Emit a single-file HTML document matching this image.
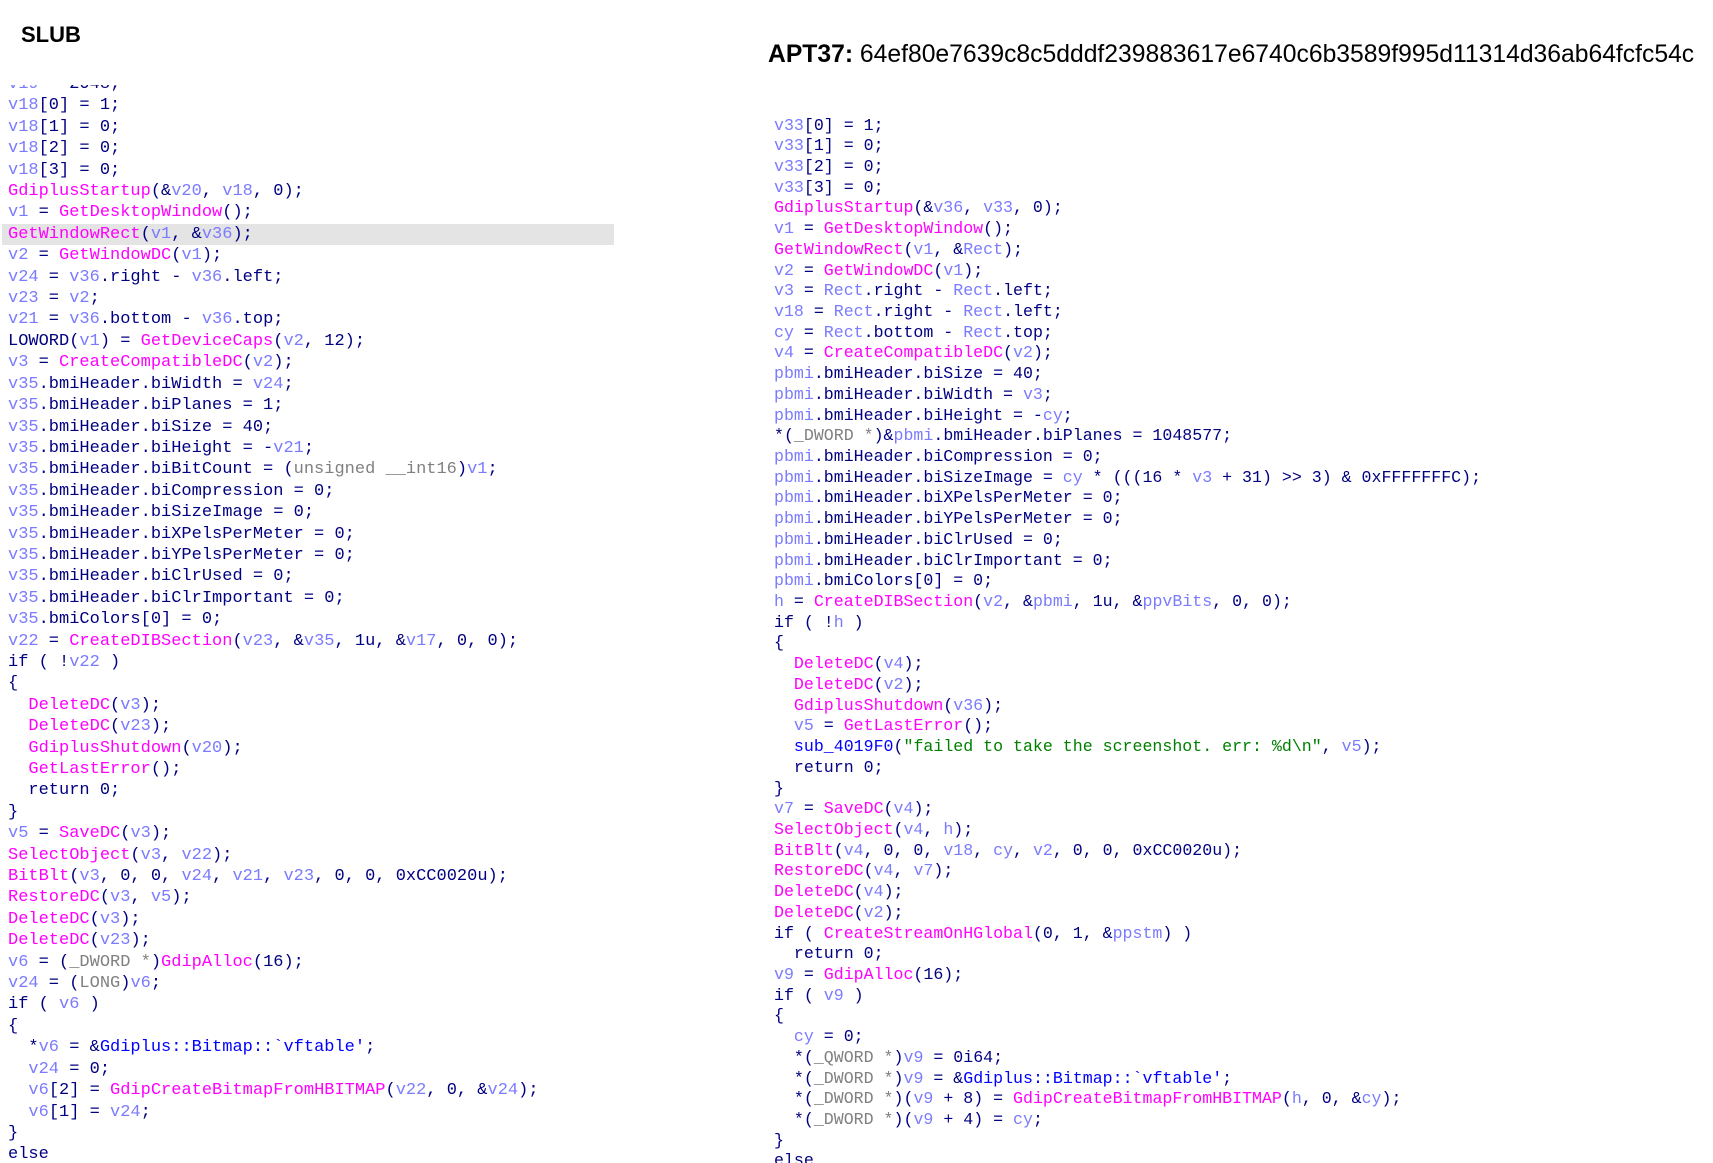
<!DOCTYPE html>
<html><head><meta charset="utf-8"><style>
html,body{margin:0;padding:0;background:#fff;width:1713px;height:1163px;overflow:hidden;position:relative}
.h{position:absolute;font-family:"Liberation Sans",sans-serif;color:#000;white-space:nowrap}
pre{margin:0;font-family:"Liberation Mono",monospace;color:#000080;position:absolute}
.v{color:#7b7bff}.f{color:#ff00ff}.g{color:#808080}.s{color:#008000}.b{color:#0000ff}
.clip{position:absolute;left:0;top:85px;width:700px;height:1078px;overflow:hidden}
#L{left:8px;top:-11px;font-size:17px;line-height:21.4px}
#R{left:774px;top:115.5px;font-size:16.6px;line-height:20.72px}
.hl{position:absolute;left:2px;width:612px;height:21.4px;background:#e4e4e4}
</style></head><body>
<div class="h" style="left:21px;top:22px;font-size:22px;font-weight:bold">SLUB</div>
<div class="h" style="left:768px;top:41px;font-size:24.7px"><b>APT37:</b> 64ef80e7639c8c5dddf239883617e6740c6b3589f995d11314d36ab64fcfc54c</div>
<div class="clip">
<div class="hl" style="top:138.8px"></div>
<pre id="L"><span class="v">v19</span> = 2048;
<span class="v">v18</span>[0] = 1;
<span class="v">v18</span>[1] = 0;
<span class="v">v18</span>[2] = 0;
<span class="v">v18</span>[3] = 0;
<span class="f">GdiplusStartup</span>(&amp;<span class="v">v20</span>, <span class="v">v18</span>, 0);
<span class="v">v1</span> = <span class="f">GetDesktopWindow</span>();
<span class="f">GetWindowRect</span>(<span class="v">v1</span>, &amp;<span class="v">v36</span>);
<span class="v">v2</span> = <span class="f">GetWindowDC</span>(<span class="v">v1</span>);
<span class="v">v24</span> = <span class="v">v36</span>.right - <span class="v">v36</span>.left;
<span class="v">v23</span> = <span class="v">v2</span>;
<span class="v">v21</span> = <span class="v">v36</span>.bottom - <span class="v">v36</span>.top;
LOWORD(<span class="v">v1</span>) = <span class="f">GetDeviceCaps</span>(<span class="v">v2</span>, 12);
<span class="v">v3</span> = <span class="f">CreateCompatibleDC</span>(<span class="v">v2</span>);
<span class="v">v35</span>.bmiHeader.biWidth = <span class="v">v24</span>;
<span class="v">v35</span>.bmiHeader.biPlanes = 1;
<span class="v">v35</span>.bmiHeader.biSize = 40;
<span class="v">v35</span>.bmiHeader.biHeight = -<span class="v">v21</span>;
<span class="v">v35</span>.bmiHeader.biBitCount = (<span class="g">unsigned __int16</span>)<span class="v">v1</span>;
<span class="v">v35</span>.bmiHeader.biCompression = 0;
<span class="v">v35</span>.bmiHeader.biSizeImage = 0;
<span class="v">v35</span>.bmiHeader.biXPelsPerMeter = 0;
<span class="v">v35</span>.bmiHeader.biYPelsPerMeter = 0;
<span class="v">v35</span>.bmiHeader.biClrUsed = 0;
<span class="v">v35</span>.bmiHeader.biClrImportant = 0;
<span class="v">v35</span>.bmiColors[0] = 0;
<span class="v">v22</span> = <span class="f">CreateDIBSection</span>(<span class="v">v23</span>, &amp;<span class="v">v35</span>, 1u, &amp;<span class="v">v17</span>, 0, 0);
if ( !<span class="v">v22</span> )
{
  <span class="f">DeleteDC</span>(<span class="v">v3</span>);
  <span class="f">DeleteDC</span>(<span class="v">v23</span>);
  <span class="f">GdiplusShutdown</span>(<span class="v">v20</span>);
  <span class="f">GetLastError</span>();
  return 0;
}
<span class="v">v5</span> = <span class="f">SaveDC</span>(<span class="v">v3</span>);
<span class="f">SelectObject</span>(<span class="v">v3</span>, <span class="v">v22</span>);
<span class="f">BitBlt</span>(<span class="v">v3</span>, 0, 0, <span class="v">v24</span>, <span class="v">v21</span>, <span class="v">v23</span>, 0, 0, 0xCC0020u);
<span class="f">RestoreDC</span>(<span class="v">v3</span>, <span class="v">v5</span>);
<span class="f">DeleteDC</span>(<span class="v">v3</span>);
<span class="f">DeleteDC</span>(<span class="v">v23</span>);
<span class="v">v6</span> = (<span class="g">_DWORD *</span>)<span class="f">GdipAlloc</span>(16);
<span class="v">v24</span> = (<span class="g">LONG</span>)<span class="v">v6</span>;
if ( <span class="v">v6</span> )
{
  *<span class="v">v6</span> = &amp;<span class="b">Gdiplus::Bitmap::`vftable'</span>;
  <span class="v">v24</span> = 0;
  <span class="v">v6</span>[2] = <span class="f">GdipCreateBitmapFromHBITMAP</span>(<span class="v">v22</span>, 0, &amp;<span class="v">v24</span>);
  <span class="v">v6</span>[1] = <span class="v">v24</span>;
}
else</pre>
</div>
<pre id="R"><span class="v">v33</span>[0] = 1;
<span class="v">v33</span>[1] = 0;
<span class="v">v33</span>[2] = 0;
<span class="v">v33</span>[3] = 0;
<span class="f">GdiplusStartup</span>(&amp;<span class="v">v36</span>, <span class="v">v33</span>, 0);
<span class="v">v1</span> = <span class="f">GetDesktopWindow</span>();
<span class="f">GetWindowRect</span>(<span class="v">v1</span>, &amp;<span class="v">Rect</span>);
<span class="v">v2</span> = <span class="f">GetWindowDC</span>(<span class="v">v1</span>);
<span class="v">v3</span> = <span class="v">Rect</span>.right - <span class="v">Rect</span>.left;
<span class="v">v18</span> = <span class="v">Rect</span>.right - <span class="v">Rect</span>.left;
<span class="v">cy</span> = <span class="v">Rect</span>.bottom - <span class="v">Rect</span>.top;
<span class="v">v4</span> = <span class="f">CreateCompatibleDC</span>(<span class="v">v2</span>);
<span class="v">pbmi</span>.bmiHeader.biSize = 40;
<span class="v">pbmi</span>.bmiHeader.biWidth = <span class="v">v3</span>;
<span class="v">pbmi</span>.bmiHeader.biHeight = -<span class="v">cy</span>;
*(<span class="g">_DWORD *</span>)&amp;<span class="v">pbmi</span>.bmiHeader.biPlanes = 1048577;
<span class="v">pbmi</span>.bmiHeader.biCompression = 0;
<span class="v">pbmi</span>.bmiHeader.biSizeImage = <span class="v">cy</span> * (((16 * <span class="v">v3</span> + 31) &gt;&gt; 3) &amp; 0xFFFFFFFC);
<span class="v">pbmi</span>.bmiHeader.biXPelsPerMeter = 0;
<span class="v">pbmi</span>.bmiHeader.biYPelsPerMeter = 0;
<span class="v">pbmi</span>.bmiHeader.biClrUsed = 0;
<span class="v">pbmi</span>.bmiHeader.biClrImportant = 0;
<span class="v">pbmi</span>.bmiColors[0] = 0;
<span class="v">h</span> = <span class="f">CreateDIBSection</span>(<span class="v">v2</span>, &amp;<span class="v">pbmi</span>, 1u, &amp;<span class="v">ppvBits</span>, 0, 0);
if ( !<span class="v">h</span> )
{
  <span class="f">DeleteDC</span>(<span class="v">v4</span>);
  <span class="f">DeleteDC</span>(<span class="v">v2</span>);
  <span class="f">GdiplusShutdown</span>(<span class="v">v36</span>);
  <span class="v">v5</span> = <span class="f">GetLastError</span>();
  <span class="b">sub_4019F0</span>(<span class="s">"failed to take the screenshot. err: %d\n"</span>, <span class="v">v5</span>);
  return 0;
}
<span class="v">v7</span> = <span class="f">SaveDC</span>(<span class="v">v4</span>);
<span class="f">SelectObject</span>(<span class="v">v4</span>, <span class="v">h</span>);
<span class="f">BitBlt</span>(<span class="v">v4</span>, 0, 0, <span class="v">v18</span>, <span class="v">cy</span>, <span class="v">v2</span>, 0, 0, 0xCC0020u);
<span class="f">RestoreDC</span>(<span class="v">v4</span>, <span class="v">v7</span>);
<span class="f">DeleteDC</span>(<span class="v">v4</span>);
<span class="f">DeleteDC</span>(<span class="v">v2</span>);
if ( <span class="f">CreateStreamOnHGlobal</span>(0, 1, &amp;<span class="v">ppstm</span>) )
  return 0;
<span class="v">v9</span> = <span class="f">GdipAlloc</span>(16);
if ( <span class="v">v9</span> )
{
  <span class="v">cy</span> = 0;
  *(<span class="g">_QWORD *</span>)<span class="v">v9</span> = 0i64;
  *(<span class="g">_DWORD *</span>)<span class="v">v9</span> = &amp;<span class="b">Gdiplus::Bitmap::`vftable'</span>;
  *(<span class="g">_DWORD *</span>)(<span class="v">v9</span> + 8) = <span class="f">GdipCreateBitmapFromHBITMAP</span>(<span class="v">h</span>, 0, &amp;<span class="v">cy</span>);
  *(<span class="g">_DWORD *</span>)(<span class="v">v9</span> + 4) = <span class="v">cy</span>;
}
else</pre>
</body></html>
